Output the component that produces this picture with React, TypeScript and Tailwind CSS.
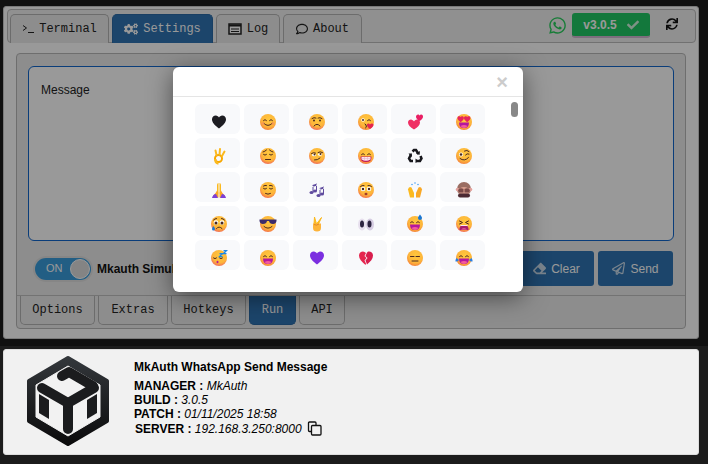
import { useId, type ReactNode } from "react";
import { FaWhatsapp, FaCheck, FaSync, FaCogs, FaRegComment, FaEraser, FaRegPaperPlane } from "react-icons/fa";

const mono = "font-['Liberation_Mono',monospace]";

function Face({ children, base = "#ffc83d", edge = "#f2793b" }: { children?: ReactNode; base?: string; edge?: string }) {
  const id = useId();
  return (
    <svg viewBox="0 0 32 32" className="w-4 h-4 overflow-visible">
      <defs>
        <radialGradient id={id} cx="55%" cy="35%" r="70%">
          <stop offset="0%" stopColor={base} />
          <stop offset="65%" stopColor="#fdb43a" />
          <stop offset="100%" stopColor={edge} />
        </radialGradient>
      </defs>
      <circle cx="16" cy="16" r="16" fill={`url(#${id})`} />
      {children}
    </svg>
  );
}

function Icon({ children }: { children: ReactNode }) {
  return (
    <svg viewBox="0 0 32 32" className="w-4 h-4 overflow-visible">
      {children}
    </svg>
  );
}

const dk = "#4a2a20";
const line = { fill: "none", stroke: dk, strokeWidth: 2, strokeLinecap: "round" as const };
const HEART = "M16 29C7 22 2 17 2 10.500C2 6 5.500 3 9.500 3C12.500 3 15 5 16 7C17 5 19.500 3 22.500 3C26.500 3 30 6 30 10.500C30 17 25 22 16 29Z";

const happyEyes = (
  <>
    <path d="M7 13q3-4 6 0" {...line} />
    <path d="M19 13q3-4 6 0" {...line} />
  </>
);
const closedEyes = (
  <>
    <path d="M7 13q3 3 6 0" {...line} />
    <path d="M19 13q3 3 6 0" {...line} />
  </>
);
const bigMouth = (
  <>
    <path d="M6 17h20q0 11-10 11T6 17Z" fill="#b5179e" />
    <path d="M9 24q7-4 14 0q-3 4-7 4t-7-4Z" fill="#f35b9b" />
  </>
);

const emojis: ReactNode[] = [
  <Icon key="1"><path d={HEART} fill="#1d1d22" /></Icon>,
  <Face key="2">{happyEyes}<path d="M8 19q8 8 16 0" {...line} /><circle cx="6" cy="19" r="3" fill="#f7846a" opacity=".5" /><circle cx="26" cy="19" r="3" fill="#f7846a" opacity=".5" /></Face>,
  <Face key="3" edge="#ee5f5b"><path d="M6 9q4-3 8-1" {...line} /><path d="M18 8q4-2 8 1" {...line} /><circle cx="10" cy="13" r="2" fill={dk} /><circle cx="22" cy="13" r="2" fill={dk} /><path d="M10 24q6-7 12 0" {...line} /></Face>,
  <Face key="4"><circle cx="10" cy="12" r="3.500" fill="#fff" /><circle cx="10" cy="12" r="2" fill={dk} /><path d="M19 13q3-4 6 0" {...line} /><path d="M14 20q4 2 2 4q3 2-1 4" {...line} /><path d="M24 30c-4-3-6-5-6-8c0-3 4-4 6-1c2-3 7-2 7 1c0 3-3 5-7 8Z" fill="#e5254e" /></Face>,
  <Icon key="5"><path d="M14 31C6 26 2 22 2 17C2 13 5 11 8 11C10 11 13 13 14 15C15 13 17 11 20 11C24 11 26 14 26 17C26 22 22 26 14 31Z" fill="#ef2f63" /><path d="M25 14C20 11 18 8 18 5.500C18 3 20 1 22 1C23.500 1 24.500 2 25 3C26 2 27 1 28.500 1C31 1 32 3 32 5.500C32 8 30 11 25 14Z" fill="#e91e63" /></Icon>,
  <Face key="6">{bigMouth}<path transform="translate(2 3) scale(.46)" d={HEART} fill="#e6255c" /><path transform="translate(15 3) scale(.46)" d={HEART} fill="#e6255c" /></Face>,

  <Icon key="7"><circle cx="15" cy="21" r="7" fill="none" stroke="#f7a700" strokeWidth="4" /><path d="M11 14 9 5M17 13 18 2M22 16 27 7" stroke="#fbb91e" strokeWidth="4" strokeLinecap="round" /><path d="M9 22q-1 8 6 9" fill="none" stroke="#fbb91e" strokeWidth="5" /></Icon>,
  <Face key="8" edge="#ee5f5b"><path d="M6 8q4-1 7-4" {...line} /><path d="M19 4q3 3 7 4" {...line} />{closedEyes}<path d="M11 23h10" {...line} /></Face>,
  <Face key="9" edge="#ee5f5b"><path d="M5 11q4-3 8-1" {...line} /><path d="M18 9q4-3 9 0" {...line} /><ellipse cx="10" cy="14" rx="4" ry="2.500" fill="#fff" /><circle cx="11" cy="13" r="2" fill={dk} /><ellipse cx="22" cy="13" rx="4" ry="2.500" fill="#fff" /><circle cx="23" cy="12" r="2" fill={dk} /><path d="M11 24q6 1 11-4" {...line} /></Face>,
  <Face key="10" edge="#f2664b">{happyEyes}<path d="M5 17h22q1 11-11 11T5 17Z" fill="#c2185b" /><path d="M7 18h18v5q-9 5-18 0Z" fill="#fbe4ee" /><path d="M7 21h18M13 18v7M19 18v7" stroke="#e2a9c5" strokeWidth="1" /></Face>,
  <Icon key="11"><g fill="none" stroke="#17171c" strokeWidth="5"><path d="M11 7l3-3h4l5 8" /><path d="M27 16l2 5-3 5h-8" /><path d="M12 26H7l-3-5 4-8" /></g><path d="M26 6l-1 8-7-3ZM17 21l0 9 6-4ZM3 11l7 0-1 8Z" fill="#17171c" /></Icon>,
  <Face key="12" edge="#f2793b"><circle cx="10" cy="13" r="4" fill="#fff" /><circle cx="10" cy="13" r="2.500" fill={dk} /><path d="M19 14q3-4 7-2" {...line} /><path d="M17 6q5-3 9 1" {...line} /><path d="M8 21q9 7 17-2" {...line} /></Face>,

  <Icon key="13"><path d="M15 2c-2 0-3 2-3 5v14l3 2Z M17 2c2 0 3 2 3 5v14l-3 2Z" fill="#fbb91e" /><path d="M12 17l-3 5-5 6v3h11v-9ZM20 17l3 5 5 6v3H17v-9Z" fill="#f9a825" /><path d="M2 32q2-8 8-8l4 8ZM30 32q-2-8-8-8l-4 8Z" fill="#7c3fd6" /></Icon>,
  <Face key="14" edge="#f2664b"><path d="M7 8q3-2 6-1" {...line} /><path d="M19 7q3-1 6 1" {...line} />{closedEyes}<path d="M11 23q5 3 10 0" {...line} /></Face>,
  <Icon key="15"><g fill="#5f4b9e"><path d="M7 6l9-3v4l-9 3ZM7 8v13h2V8ZM14 5v13h2V5Z" /><ellipse cx="5" cy="21" rx="4" ry="3" /><ellipse cx="12" cy="18" rx="4" ry="3" /><path d="M21 12l9-3v4l-9 3ZM21 13v14h2V13ZM28 11v13h2V11Z" /><ellipse cx="19" cy="27" rx="4" ry="3" /><ellipse cx="26" cy="24" rx="4" ry="3" /></g></Icon>,
  <Face key="16" edge="#f2664b"><path d="M5 9q3-3 7-2" {...line} /><path d="M20 7q4-1 7 2" {...line} /><circle cx="10" cy="14" r="4.500" fill="#fff" /><circle cx="10" cy="14" r="2.500" fill={dk} /><circle cx="22" cy="14" r="4.500" fill="#fff" /><circle cx="22" cy="14" r="2.500" fill={dk} /><ellipse cx="16" cy="24" rx="3" ry="2.500" fill="#a23a2a" /></Face>,
  <Icon key="17"><g fill="#3b9cf5"><circle cx="16" cy="2" r="1.500" /><circle cx="10" cy="5" r="1.500" /><circle cx="22" cy="5" r="1.500" /></g><path d="M2 15q1-5 4-5l3 1 5 11v9H6Z" fill="#fbb91e" /><path d="M30 15q-1-5-4-5l-3 1-5 11v9h8Z" fill="#f9a825" /></Icon>,
  <Icon key="18"><circle cx="16" cy="14" r="14" fill="#9a6d62" /><circle cx="3" cy="15" r="3.500" fill="#e2a19b" /><circle cx="29" cy="15" r="3.500" fill="#e2a19b" /><ellipse cx="16" cy="19" rx="11" ry="9" fill="#d99f8e" /><path d="M4 16q4-6 11-2v7H6ZM28 16q-4-6-11-2v7h9Z" fill="#7a4a48" /><rect x="4" y="23" width="24" height="8" rx="4" fill="#4c2a33" /></Icon>,

  <Face key="19" edge="#ee5f5b"><circle cx="10" cy="13" r="4.500" fill="#fff" /><circle cx="10" cy="14" r="3" fill={dk} /><circle cx="22" cy="13" r="4.500" fill="#fff" /><circle cx="22" cy="14" r="3" fill={dk} /><path d="M5 8q3-3 6-3" {...line} /><path d="M21 5q3 0 6 3" {...line} /><path d="M11 25q5-6 11 0" {...line} /><path d="M5 20q3 4 3 6a3 3 0 0 1-6 0q0-2 3-6Z" fill="#1976d2" /></Face>,
  <Face key="20" edge="#f2664b"><path d="M-1 7h34v3q-1 6-7 6q-7 0-8-6h-4q-1 6-8 6q-6 0-7-6Z" fill="#3d2c6b" /><path d="M8 21q8 7 16 0" {...line} /></Face>,
  <Icon key="21"><path d="M11 2l4 14h-5ZM25 3l-6 13h-4Z" fill="#fbb91e" stroke="#fbb91e" strokeWidth="2" strokeLinejoin="round" /><path d="M8 15h16v9q0 7-8 7t-8-7Z" fill="#fdb43a" /><path d="M10 17q5 3 10-1" fill="none" stroke="#e0862a" strokeWidth="2" /></Icon>,
  <Icon key="22"><ellipse cx="8" cy="17" rx="8" ry="12" fill="#e7e0ee" /><ellipse cx="24" cy="17" rx="8" ry="12" fill="#d6cde2" /><ellipse cx="8" cy="16" rx="4" ry="7" fill="#2c2440" /><ellipse cx="23" cy="16" rx="4" ry="7" fill="#2c2440" /></Icon>,
  <Face key="23" edge="#f2793b">{happyEyes}{bigMouth}<path d="M26 -3q4 5 4 7a4 4 0 0 1-8 0q0-2 4-7Z" fill="#1976d2" /></Face>,
  <Face key="24" edge="#ee5f5b"><path d="M7 10l6 3-6 3M25 10l-6 3 6 3" {...line} /><path d="M7 28q-1-10 9-10t9 10Z" fill="#a81e6e" /><path d="M10 27q6-5 12 0Z" fill="#f06c9b" /><path d="M9 19h14" stroke="#fbe4ee" strokeWidth="2" /></Face>,

  <Face key="25" edge="#ee5f5b"><path d="M5 16q3 3 6 0" {...line} /><path d="M17 16q3 3 6 0" {...line} /><ellipse cx="13" cy="24" rx="2" ry="2.500" fill="#b5179e" /><g fill="none" stroke="#1e88e5" strokeWidth="2.500"><path d="M17 7h6l-6 6h6" /><path d="M25 1h6l-6 6h6" /></g></Face>,
  <Face key="26" edge="#f2793b">{happyEyes}{bigMouth}</Face>,
  <Icon key="27"><path d={HEART} fill="#7b2fe0" /></Icon>,
  <Icon key="28"><path d="M15 30C7 23 2 18 2 11C2 6 6 3 10 3C12 3 14 4 16 6L13 12L17 16L13 21L16 27Z" fill="#e5254e" /><path d="M18 29C25 23 30 18 30 11C30 6 26 3 22 3C20 3 19 4 18 5L15 12L19 16L15 21Z" fill="#d81e4d" /></Icon>,
  <Face key="29" edge="#f2793b"><path d="M7 13h7M18 13h7M10 22h12" {...line} /></Face>,
  <Face key="30" edge="#f2793b">{happyEyes}{bigMouth}<path d="M1 16q-3 4-2 7q4 1 7-3ZM31 16q3 4 2 7q-4 1-7-3Z" fill="#2b7de0" /></Face>,
];

function TopTab({ w, active, icon, label }: { w: string; active?: boolean; icon: ReactNode; label: string }) {
  return (
    <div
      className={`${w} h-[29px] pb-[1px] flex items-center justify-center gap-[5px] rounded-t-[5px] border border-b-0 text-xs ${mono} ${
        active ? "bg-[#2f74b2] border-[#2a6aa6] text-white" : "bg-[#ececec] border-[#b4b4b4] text-[#222]"
      }`}
    >
      {icon}
      <span>{label}</span>
    </div>
  );
}

function BottomTab({ w, active, label }: { w: string; active?: boolean; label: string }) {
  return (
    <div
      className={`${w} h-[29px] flex items-center justify-center rounded-b-[5px] border border-t-0 text-xs ${mono} ${
        active ? "bg-[#2f74b2] border-[#2a6aa6] text-white" : "bg-[#ececec] border-[#b4b4b4] text-[#222]"
      }`}
    >
      {label}
    </div>
  );
}

function Logo() {
  return (
    <svg viewBox="-2 -2 86 94" className="w-[86px] h-[94px]">
      <defs>
        <linearGradient id="logoDark" x1="0" y1="0" x2="0" y2="1">
          <stop offset="0%" stopColor="#33373b" />
          <stop offset="100%" stopColor="#0b0b0c" />
        </linearGradient>
      </defs>
      <path d="M41 2 80 25V65L41 88 2 65V25Z" fill="url(#logoDark)" stroke="url(#logoDark)" strokeWidth="4" strokeLinejoin="round" />
      <path d="M41 10 73 29V61L41 80 9 61V29Z" fill="#f2f2f2" stroke="#f2f2f2" strokeWidth="1" strokeLinejoin="round" />
      <g fill="none" stroke="#1b1c1e" strokeLinecap="round" strokeLinejoin="round" strokeWidth="10">
        <path d="M15 32 41 47V73" />
        <path d="M41 47 67 32" />
        <path d="M35 20 42 16 66 30" />
      </g>
      <path d="M12 38 22 44V63L12 57Z" fill="#1b1c1e" />
      <path d="M70 38 60 44V63L70 57Z" fill="#1b1c1e" />
    </svg>
  );
}

export default function App() {
  return (
    <div className="relative w-[708px] h-[464px] overflow-hidden bg-[#1c1c1c] font-['Liberation_Sans',Arial,sans-serif] pt-[6px] pl-[3px]">
      <div className="w-[696px] h-[333px] bg-white border border-[#ccc] rounded-[3px] pt-[2px] pl-[3px]">
        <div className="w-[689px] h-[34px] border border-[#bdbdbd] rounded-[4px] pl-[2px] pt-[4px] bg-[#f0f0f0] flex">
          <div className="flex gap-[3px]">
            <TopTab
              w="w-[99px]"
              icon={
                <svg viewBox="0 0 12 10" className="w-[12px] h-[10px]" fill="none" stroke="#222" strokeWidth="1">
                  <path d="M1 1.500 4.500 4 1 6.500M6 8.500h6" />
                </svg>
              }
              label="Terminal"
            />
            <TopTab w="w-[101px]" active icon={<FaCogs className="w-[14px] h-[14px]" />} label="Settings" />
            <TopTab
              w="w-[64px]"
              icon={
                <svg viewBox="0 0 14 12" className="w-[14px] h-[12px]">
                  <path d="M1 1h12v10H1Z" fill="#fff" stroke="#222" strokeWidth="1.500" />
                  <path d="M1 1.500h12v2H1ZM3 5.500h8v1H3ZM3 8h8v1H3Z" fill="#222" />
                </svg>
              }
              label="Log"
            />
            <TopTab w="w-[79px]" icon={<FaRegComment className="w-3 h-3" />} label="About" />
          </div>
          <div className="ml-auto flex items-start pr-[17px]">
            <FaWhatsapp className="w-[19px] h-[19px] text-[#27cf5c] mt-[2px] mr-[5px]" />
            <div className="w-[78px] h-[25px] -mt-[1px] rounded-[3px] bg-[#21c864] border-b-2 border-b-[#d0b8d0] flex items-center justify-center gap-[10px] text-white font-bold text-[12px]">
              v3.0.5
              <FaCheck className="w-3 h-3 opacity-80" />
            </div>
            <FaSync className="w-3 h-3 text-[#111] ml-[16px] mt-[4px]" />
          </div>
        </div>

        <div className="ml-[9px] mt-[10px] w-[670px] h-[276px] border border-[#b8b8b8] rounded-[4px] bg-[#ececec] pl-[11px] pt-[12px] flex flex-col">
          <div className="w-[646px] h-[175px] rounded-[6px] border border-[#1166cc] bg-white pl-[12px] pt-[15px] text-xs text-[#222]">
            Message
          </div>
          <div className="w-[645px] h-[35px] mt-[10px] flex items-center">
            <div className="w-[60px] h-[26px] ml-[5px] rounded-full bg-[#e0e0e0] p-[2px]">
              <div className="h-[22px] rounded-full bg-[#3a9ddc] flex items-center justify-between pr-[1px] text-[11px] text-white pl-[11px]">
                ON
                <span className="w-[20px] h-[20px] rounded-full bg-[#ddd] border border-white" />
              </div>
            </div>
            <span className="ml-[4px] font-bold text-xs text-[#111]">Mkauth Simulator</span>
            <div className="ml-auto flex gap-[4px]">
              <div className="w-[75px] h-[35px] rounded-[3px] bg-[#2f74b2] text-white text-xs flex items-center justify-center gap-[5px]">
                <FaEraser className="w-[13px] h-[13px] opacity-75" />
                Clear
              </div>
              <div className="w-[75px] h-[35px] rounded-[3px] bg-[#2f74b2] text-white text-xs flex items-center justify-center gap-[5px]">
                <FaRegPaperPlane className="w-[13px] h-[13px] opacity-75" />
                Send
              </div>
            </div>
          </div>
          <div className="-ml-[11px] mt-[9px] w-[668px] h-[33px] border-t border-[#c0c0c0] pl-[3px] flex gap-[3px]">
            <BottomTab w="w-[75px]" label="Options" />
            <BottomTab w="w-[70px]" label="Extras" />
            <BottomTab w="w-[75px]" label="Hotkeys" />
            <BottomTab w="w-[47px]" active label="Run" />
            <BottomTab w="w-[46px]" label="API" />
          </div>
        </div>
      </div>

      <div className="mt-[10px] w-[696px] h-[106px] rounded-[3px] border border-[#ddd] bg-[#f1f1f1] flex">
        <div className="ml-[21px] mt-[4px]">
          <Logo />
        </div>
        <div className="ml-[23px] pt-[10px] text-xs leading-[14px] text-black">
          <div className="font-bold mb-[5px]">MkAuth WhatsApp Send Message</div>
          <div><b>MANAGER :</b> <i>MkAuth</i></div>
          <div><b>BUILD :</b> <i>3.0.5</i></div>
          <div><b>PATCH :</b> <i>01/11/2025 18:58</i></div>
          <div className="flex items-center gap-[5px]">
            <span><b className="ml-px">SERVER :</b> <i>192.168.3.250:8000</i></span>
            <svg viewBox="0 0 15 15" className="w-[15px] h-[15px]" fill="none" stroke="#111" strokeWidth="1.300">
              <path d="M4 10.500H2.500a1 1 0 0 1-1-1V2a1 1 0 0 1 1-1H8a1 1 0 0 1 1 1v2" />
              <rect x="4.500" y="4.500" width="9.500" height="9.500" rx="1" fill="#f1f1f1" />
            </svg>
          </div>
        </div>
      </div>

      {/* modal backdrop covers only the main panel */}
      <div className="absolute left-0 top-0 w-[708px] h-[346px] bg-black/40">
        <div className="absolute left-[173px] top-[67px] w-[350px] h-[225px] rounded-[6px] bg-white shadow-[0_5px_25px_rgba(0,0,0,0.5)] overflow-hidden">
          <div className="h-[30px] border-b border-[#e5e5e5] relative">
            <span className="absolute right-[15px] top-[5px] text-[20px] leading-[20px] font-bold text-[#ccc]">×</span>
          </div>
          <div className="grid grid-cols-[repeat(6,45px)] auto-rows-[30px] gap-[4px] pl-[22px] pt-[7px]">
            {emojis.map((emoji, i) => (
              <div key={i} className="rounded-[6px] bg-[#f8f9fb] flex justify-center pt-[10px] pl-[3px]">
                {emoji}
              </div>
            ))}
          </div>
          <div className="absolute left-[338px] top-[35px] w-[7px] h-[15px] rounded-full bg-[#888]" />
        </div>
      </div>
    </div>
  );
}
